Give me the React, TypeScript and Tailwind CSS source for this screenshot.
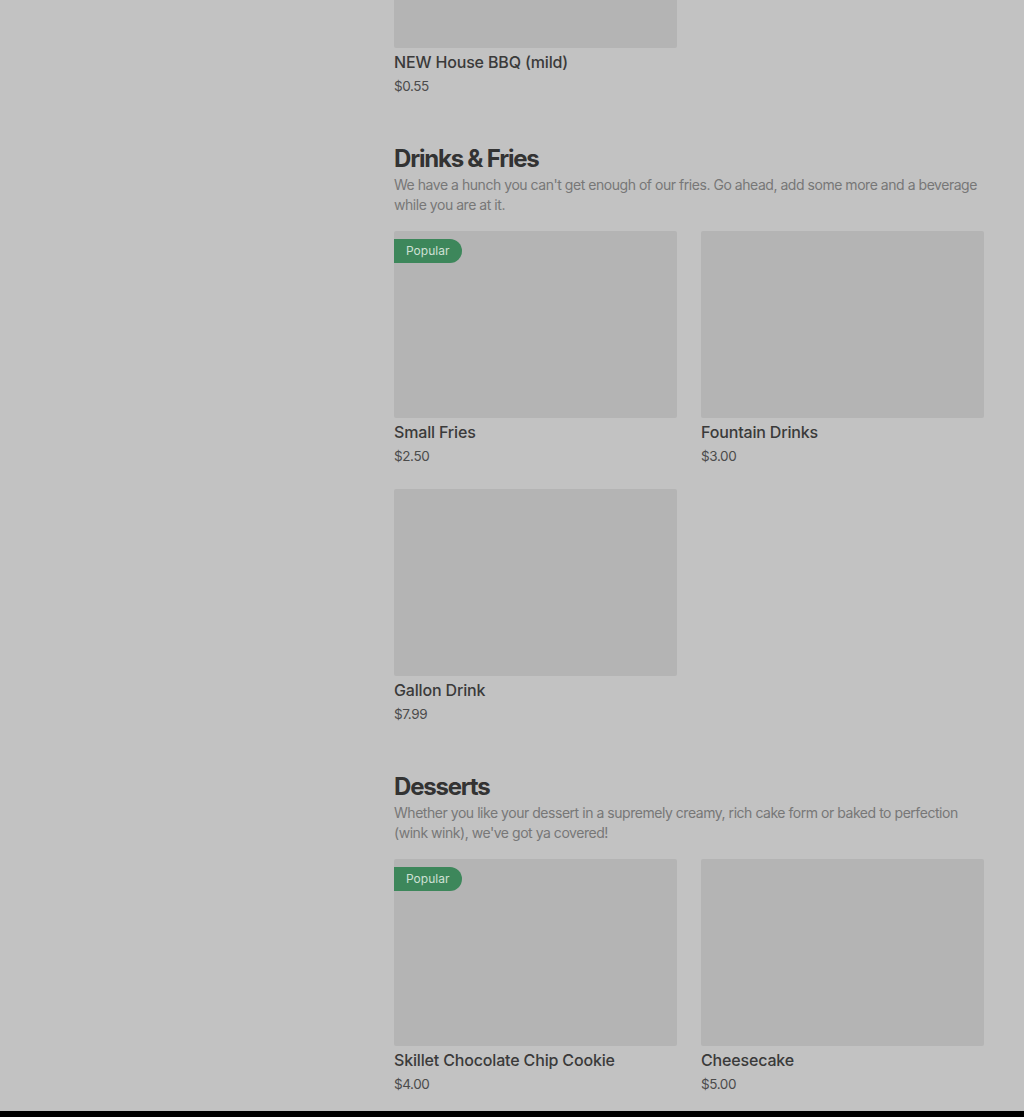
const drinks = [
  { name: 'Small Fries', price: '$2.50', popular: true },
  { name: 'Fountain Drinks', price: '$3.00' },
  { name: 'Gallon Drink', price: '$7.99' },
]

const desserts = [
  { name: 'Skillet Chocolate Chip Cookie', price: '$4.00', popular: true },
  { name: 'Cheesecake', price: '$5.00' },
]

type Item = { name: string; price: string; popular?: boolean }

function ItemCard({ item }: { item: Item }) {
  return (
    <div className="flex flex-col">
      <div className="relative h-[187px] bg-[#b4b4b4] rounded-[2px]">
        {item.popular && (
          <span className="absolute left-0 top-2 h-6 w-[68px] pl-3 flex items-center rounded-r-full bg-[#3d875b] text-[#cfe0d5] text-xs">
            Popular
          </span>
        )}
      </div>
      <div className="mt-[2px] text-base leading-6 font-medium tracking-[-0.01em] text-[#3a3a3a]">{item.name}</div>
      <div className="mt-[2px] text-[13.5px] leading-5 tracking-[-0.03em] text-[#4b4b4b]">{item.price}</div>
    </div>
  )
}

function Section({ title, desc, items }: { title: string; desc: string; items: Item[] }) {
  return (
    <section className="mt-[47px]">
      <h2 className="text-2xl leading-8 font-bold tracking-[-0.05em] text-[#333333]">{title}</h2>
      <p className="text-sm leading-5 text-[#777777] tracking-[-0.033em]">{desc}</p>
      <div className="mt-4 grid grid-cols-2 gap-x-6 gap-y-[23px]">
        {items.map((item) => (
          <ItemCard key={item.name} item={item} />
        ))}
      </div>
    </section>
  )
}

export default function App() {
  return (
    <div className="h-[1117px] overflow-hidden bg-[#c2c2c2] flex flex-col" style={{ fontFamily: 'Inter, "Noto Sans", sans-serif' }}>
      <div className="flex-1 pl-[394px] pr-10">
        <div className="-mt-[139px] grid grid-cols-2 gap-x-6">
          <ItemCard item={{ name: 'NEW House BBQ (mild)', price: '$0.55' }} />
        </div>
        <Section
          title="Drinks & Fries"
          desc="We have a hunch you can't get enough of our fries. Go ahead, add some more and a beverage while you are at it."
          items={drinks}
        />
        <Section
          title="Desserts"
          desc="Whether you like your dessert in a supremely creamy, rich cake form or baked to perfection (wink wink), we've got ya covered!"
          items={desserts}
        />
      </div>
      <div className="h-[6px] bg-black" />
    </div>
  )
}
